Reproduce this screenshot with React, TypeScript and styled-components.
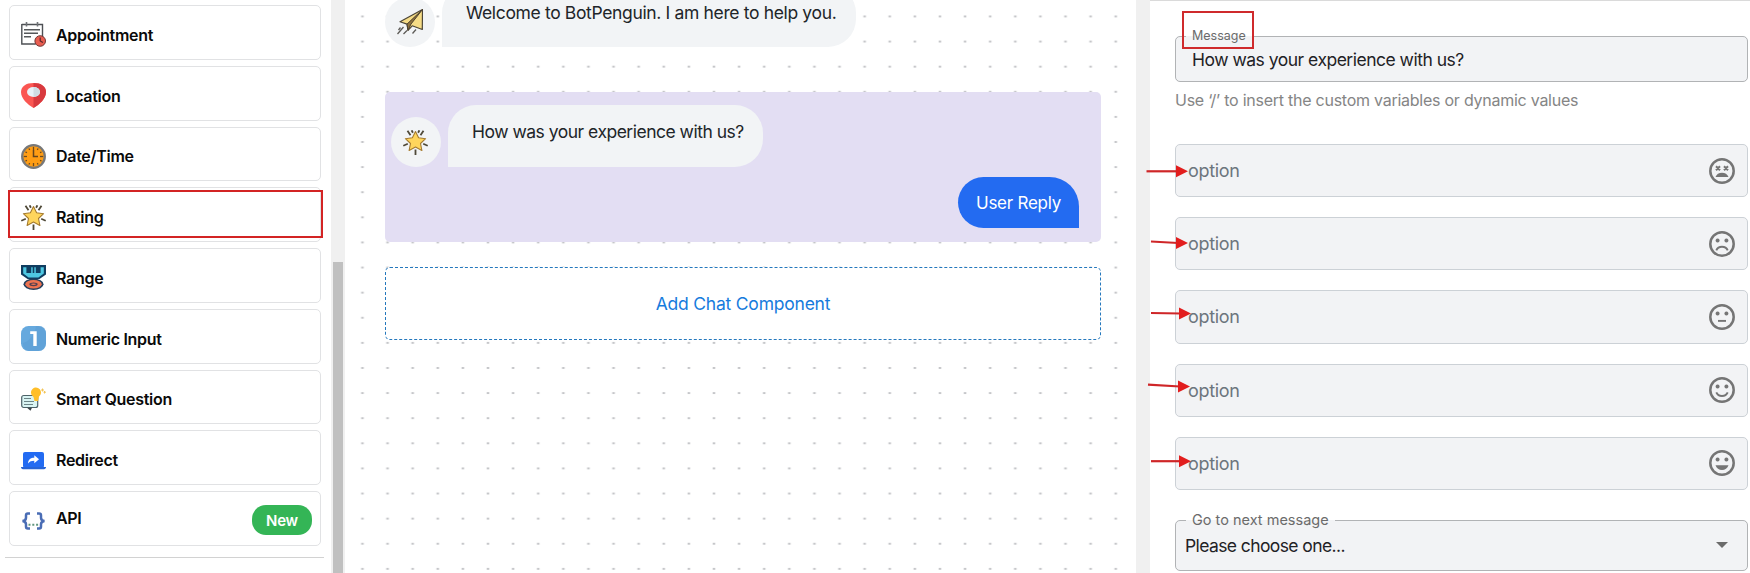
import React from "react";
import styled, { createGlobalStyle } from "styled-components";

const GlobalStyle = createGlobalStyle`
  * { box-sizing: border-box; }
  html, body { margin: 0; padding: 0; background: #fff; overflow: hidden; }
  body { font-family: Inter, "Liberation Sans", sans-serif; color: #212529; }
  svg { display: block; flex: none; }
`;

const Page = styled.div`
  position: relative;
  display: flex;
  width: 1750px;
  height: 573px;
  overflow: hidden;
  background: #fff;
`;

const Sidebar = styled.aside`
  width: 331px;
  padding: 5px 7px 0 5px;
`;

const ComponentList = styled.div`
  display: flex;
  flex-direction: column;
  gap: 6px;
  height: 553px;
  padding: 0 3px 0 4px;
  border-bottom: 1px solid #d2d2d2;
`;

const ComponentCard = styled.div`
  display: flex;
  align-items: center;
  height: 54.75px;
  flex: none;
  padding: 5px 8px 0 11px;
  border: 1px solid #e1e2e4;
  border-radius: 5px;
`;

const ComponentName = styled.span<{ $raised?: boolean }>`
  margin-left: 10px;
  flex: 1;
  font-size: 16px;
  font-weight: 600;
  line-height: 20px;
  color: #0a0a0a;
  letter-spacing: -0.3px;
  padding-bottom: ${(p) => (p.$raised ? 6 : 0)}px;
`;

const NewBadge = styled.span`
  display: flex;
  align-items: center;
  justify-content: center;
  width: 60px;
  height: 30px;
  padding-top: 2px;
  margin-bottom: 2px;
  border-radius: 14px;
  background: #34b556;
  color: #fff;
  font-size: 15px;
  font-weight: 600;
  letter-spacing: -0.2px;
`;

const ScrollTrack = styled.div`
  width: 14px;
  padding: 262px 2px 0;
  background: #f0f0f0;
`;

const ScrollThumb = styled.div`
  height: 311px;
  background: #c0c0c0;
`;

const Canvas = styled.main`
  width: 791px;
  padding: 0 35px 0 40px;
  background-image: radial-gradient(ellipse 1.9px 1.2px at center, #b9babd 0, #c9cacd 60%, transparent 100%);
  background-size: 25.12px 25.12px;
  background-position: 4.9px 3.9px;
`;

const MessageRow = styled.div`
  display: flex;
  align-items: flex-end;
  gap: 7px;
  height: 62px;
  margin-top: -15px;
`;

const Avatar = styled.div`
  display: flex;
  align-items: center;
  justify-content: center;
  width: 50px;
  height: 50px;
  padding-right: 1px;
  border-radius: 50%;
  background: #f2f4f6;
`;

const BotBubble = styled.div<{ $width: number; $spacing: number; $top: number }>`
  width: ${(p) => p.$width}px;
  height: 62px;
  padding: ${(p) => p.$top}px 0 0 24px;
  border-radius: 28px 28px 28px 0;
  background: #f2f4f6;
  color: #212529;
  font-size: 17.5px;
  line-height: 24px;
  white-space: nowrap;
  letter-spacing: ${(p) => p.$spacing}px;
`;

const SelectedBlock = styled.section`
  height: 150px;
  margin-top: 45px;
  padding: 28px 22px 0 6px;
  border-radius: 5px;
  background: #e3def3;
`;

const ReplyRow = styled.div`
  display: flex;
  justify-content: flex-end;
  margin-top: 10px;
`;

const UserBubble = styled.div`
  width: 121px;
  height: 51px;
  padding: 1px 0 0 18px;
  border-radius: 26px 30px 0 26px;
  background: #236bf1;
  color: #fff;
  font-size: 17px;
  line-height: 50px;
  letter-spacing: -0.25px;
  white-space: nowrap;
`;

const AddButton = styled.button`
  display: block;
  width: 100%;
  height: 73px;
  margin-top: 25px;
  border: 1px dashed #2478bd;
  border-radius: 5px;
  background: #fff;
  color: #167bdd;
  font-family: inherit;
  font-size: 17.5px;
  letter-spacing: -0.22px;
`;

const Divider = styled.div`
  width: 14px;
  background: #f0f0f0;
`;

const Settings = styled.section`
  width: 600px;
  padding: 35px 2px 0 25px;
  border-top: 1px solid #dadada;
`;

const OutlinedField = styled.fieldset<{ $height: number; $inset: number }>`
  display: flex;
  align-items: center;
  justify-content: space-between;
  position: relative;
  width: 573px;
  height: ${(p) => p.$height}px;
  margin: 0;
  padding: 0 19px 0 ${(p) => p.$inset}px;
  border: 1px solid #b1b3b5;
  border-radius: 5px;
  background: #f2f3f5;
`;

const FloatingLabel = styled.span<{ $size: number; $width: number }>`
  position: absolute;
  left: 10px;
  top: -11px;
  width: ${(p) => p.$width}px;
  height: 19px;
  padding-left: 6px;
  background: linear-gradient(#fff 0 10px, #f2f3f5 10px);
  color: #6b6b6b;
  font-size: ${(p) => p.$size}px;
  line-height: 19px;
  white-space: nowrap;
`;

const FieldValue = styled.span<{ $spacing: number }>`
  padding-top: 2px;
  font-size: 17.5px;
  line-height: 24px;
  color: #1f2226;
  letter-spacing: ${(p) => p.$spacing}px;
`;

const Hint = styled.p`
  margin: 7px 0 0;
  font-size: 16px;
  line-height: 22px;
  color: #858585;
  letter-spacing: -0.25px;
  white-space: nowrap;
`;

const OptionList = styled.div`
  display: flex;
  flex-direction: column;
  gap: 20px;
  margin: 33px 0 30px;
`;

const OptionField = styled.div`
  display: flex;
  align-items: center;
  justify-content: space-between;
  width: 573px;
  height: 53.2px;
  padding: 0 12px 0 12px;
  border: 1px solid #ccd1d6;
  border-radius: 5px;
  background: #f2f3f5;
  color: #6c757d;
  font-size: 18px;
  letter-spacing: -0.3px;
`;

const RatingMark = styled.div`
  position: absolute;
  left: 8px;
  top: 190px;
  width: 315px;
  height: 48px;
  border: 2px solid #d32424;
`;

const LabelMark = styled.div`
  position: absolute;
  left: 1182px;
  top: 11px;
  width: 72px;
  height: 38px;
  border: 2px solid #cf2a2c;
`;

const Arrows = styled.svg`
  position: absolute;
  left: 1140px;
  top: 150px;
`;

const AppointmentIcon = () => (
  <svg width="25" height="25" viewBox="0 0 25 25">
    <path d="M.8 2.5h20.7v14M.8 2v20h14" fill="none" stroke="#4d5054" strokeWidth="1.4" />
    <path d="M5.5 0v4.5M16.5 0v4.5" stroke="#707377" strokeWidth="1.6" />
    <path d="M3 7.8h16M3 11.3h14M3 14.8h7" stroke="#55585b" strokeWidth="1.4" />
    <circle cx="19.2" cy="19" r="5.3" fill="#e95d50" stroke="#703736" />
    <path d="M19.2 15.5V19l2.7 1.6" fill="none" stroke="#54272b" strokeWidth="1.2" />
  </svg>
);

const LocationIcon = () => (
  <svg width="25" height="25" viewBox="0 0 25 25">
    <path d="M12.5 0C5 0 0 3.4 0 9c0 6.5 6.5 12.5 12.5 16C18.5 21.5 25 15.5 25 9c0-5.6-5-9-12.5-9z" fill="#fa5652" />
    <path d="M12.5 0C20 0 25 3.4 25 9c0 6.5-6.5 12.5-12.5 16z" fill="#d8393e" />
    <ellipse cx="12.5" cy="9" rx="6.5" ry="4.9" fill="#e8f2f8" />
    <path d="M12.5 4.1a6.5 4.9 0 0 1 0 9.8z" fill="#cfdce3" />
  </svg>
);

const ClockIcon = () => (
  <svg width="25" height="25" viewBox="0 0 25 25">
    <circle cx="12.5" cy="12.5" r="11.3" fill="#ff9d14" stroke="#787878" strokeWidth="2.3" />
    <g stroke="#6c4a20" strokeWidth="1.3">
      {[0, 30, 60, 90, 120, 150, 180, 210, 240, 270, 300, 330].map((a) => (
        <path key={a} d={a % 90 ? "M12.5 3.3v1.6" : "M12.5 2.8v3.2"} transform={`rotate(${a} 12.5 12.5)`} />
      ))}
    </g>
    <path d="M12.5 6v6.500h4.500" fill="none" stroke="#64451e" strokeWidth="1.5" />
  </svg>
);

const StarIcon = () => (
  <svg width="25" height="25" viewBox="0 0 25 25">
    <path d="M4.500.8l3 4.400M8.600.3l1.300 2.400M20.500.8l-3 4.400M16.400.3l-1.300 2.400M.3 15.800l4.500-2M24.700 15.800l-4.500-2M12.500 19.500V25" stroke="#4f4938" strokeWidth="1.800" />
    <path d="M12.500 1.600l3.100 6.100 7 1-5.100 4.800 1.400 7-6.400-3.400-6.400 3.400 1.400-7-5.100-4.800 7-1z" fill="#ffd55c" stroke="#a57b2f" strokeWidth="1.100" strokeLinejoin="round" />
  </svg>
);

const MedalIcon = () => (
  <svg width="25" height="25" viewBox="0 0 25 25">
    <path d="M0 0h25v9.500L18.500 14h-12L0 9.500z" fill="#103d60" />
    <path d="M2.200 2.200h3.200V8h4.800V2.200h4.600V8h4.800V2.200h3.200v6.300l-5.400 4H7.600l-5.400-4z" fill="#4fc8e2" />
    <path d="M11.700 2h1.600v6h-1.600z" fill="#103d60" />
    <ellipse cx="12.500" cy="19.300" rx="10" ry="5.700" fill="#243f5c" />
    <ellipse cx="12.500" cy="19.300" rx="8.200" ry="4.200" fill="#ed7350" />
    <ellipse cx="12.500" cy="19.300" rx="4.200" ry="1.900" fill="#54404f" />
    <ellipse cx="12.500" cy="19.300" rx="2.400" ry=".8" fill="#ed7350" />
  </svg>
);

const NumberIcon = () => (
  <svg width="25" height="25" viewBox="0 0 25 25">
    <rect width="25" height="25" rx="7.500" fill="#66a9de" />
    <path d="M2 17C8 16 14 8 15 0h3c4.500 0 7 3 7 7.500v10c0 4.500-3 7.500-7.500 7.500h-9C5 25 2 22 2 17z" fill="#5b9dd4" opacity=".55" />
    <path d="M9.200 5.200h6.500V20h-3.400V8H9.200z" fill="#fff" />
  </svg>
);

const QuestionIcon = () => (
  <svg width="25" height="25" viewBox="0 0 25 25">
    <rect x=".7" y="8.500" width="16" height="12" rx="2" fill="#d9f4f3" stroke="#4d6268" strokeWidth="1.200" />
    <path d="M6 20.700h5l-1.500 3z" fill="#3d4549" />
    <path d="M3 11.500h7M3 14.500h10M3 17.500h9" stroke="#6d8587" strokeWidth="1" />
    <path d="M10 6a5 5 0 1 1 8 3.500L17 14h-3.500l-1-4A5 5 0 0 1 10 6z" fill="#ffbe28" />
    <path d="M21.500 1.500v3M20 3h3M23.500 4v2.500M22.500 5.200h2.500" stroke="#f2c458" />
  </svg>
);

const RedirectIcon = () => (
  <svg width="25" height="25" viewBox="0 0 25 25">
    <rect x="2" y="4" width="21" height="16" rx="2" fill="#236bf2" />
    <path d="M0 19h25c0 1.300-.8 2.200-2 2.200H2C.8 21.200 0 20.300 0 19z" fill="#2764d6" />
    <path d="M7 15.500c.3-4 2.600-5.700 6.300-5.700V7.300l4.700 4-4.700 4v-2.500c-2.800 0-4.700.7-6.300 2.700z" fill="#fff" />
  </svg>
);

const ApiIcon = () => (
  <svg width="25" height="25" viewBox="0 0 25 25">
    <g fill="none" stroke="#4a6db5" strokeWidth="2.500">
      <path d="M9 5.500H6.800c-1.400 0-1.800.7-1.800 2v2.300c0 2-1 3-3.500 3.300C4 13.400 5 14.300 5 16.300v2.200c0 1.300.4 2 1.800 2H9" />
      <path d="M16 5.500h2.200c1.400 0 1.800.7 1.800 2v2.300c0 2 1 3 3.500 3.300-2.500.3-3.500 1.200-3.500 3.200v2.200c0 1.300-.4 2-1.800 2H16" />
    </g>
    <path d="M7.500 16.800h10.500" stroke="#61967e" strokeWidth="2" strokeDasharray="2 1.800" />
  </svg>
);

const PlaneIcon = () => (
  <svg width="26" height="26" viewBox="0 0 26 26">
    <path d="M25.500.5L3 12.800l7 2.300 1 6.200 4.200-4.500 10.100 3.700z" fill="#f6dc86" stroke="#4d4637" strokeWidth="1.200" strokeLinejoin="round" />
    <path d="M25.500.5L10 15.100l1 6.200 3-6.300z" fill="#8f713c" stroke="#4b412f" strokeWidth="1" strokeLinejoin="round" />
    <path d="M6.500 18L.5 25M10 21.500L6.500 25M19 20.500l-3.500 4M3.500 18.500L1.500 21" stroke="#5d5b57" strokeWidth="1.300" />
  </svg>
);

type Mood = "dead" | "sad" | "neutral" | "happy" | "grin";

const Face = ({ mood }: { mood: Mood }) => (
  <svg width="26" height="26" viewBox="0 0 26 26" fill="none" stroke="#757575" strokeWidth="2.500">
    <circle cx="13" cy="13" r="11.700" />
    {mood === "dead" ? (
      <path d="M7 8.200l4 4m0-4l-4 4M15 8.200l4 4m0-4l-4 4" strokeWidth="2" />
    ) : (
      <path d="M8.600 7.400a2 2 0 1 0 .01 0zM17.400 7.400a2 2 0 1 0 .01 0z" fill="#757575" stroke="none" />
    )}
    {mood === "dead" && <path d="M6.500 19c1-2.800 3.400-4.300 6.500-4.300s5.500 1.500 6.500 4.300z" fill="#757575" stroke="none" />}
    {mood === "sad" && <path d="M7.300 19.300c1-2.300 3.100-3.500 5.700-3.500s4.700 1.200 5.700 3.500" strokeWidth="1.900" />}
    {mood === "neutral" && <path d="M9 16.900h8" strokeWidth="1.900" />}
    {mood === "happy" && <path d="M7.300 15.400c1 2.300 3.100 3.600 5.700 3.600s4.700-1.300 5.700-3.600" strokeWidth="1.900" />}
    {mood === "grin" && <path d="M6.500 15.200h13c-1 3.100-3.500 4.800-6.500 4.800s-5.500-1.700-6.500-4.800z" fill="#757575" stroke="none" />}
  </svg>
);

const components = [
  { name: "Appointment", icon: <AppointmentIcon /> },
  { name: "Location", icon: <LocationIcon /> },
  { name: "Date/Time", icon: <ClockIcon /> },
  { name: "Rating", icon: <StarIcon /> },
  { name: "Range", icon: <MedalIcon /> },
  { name: "Numeric Input", icon: <NumberIcon /> },
  { name: "Smart Question", icon: <QuestionIcon /> },
  { name: "Redirect", icon: <RedirectIcon /> },
  { name: "API", icon: <ApiIcon />, isNew: true },
];

const moods: Mood[] = ["dead", "sad", "neutral", "happy", "grin"];

const arrows = [
  [6.5, 21.3, 48, 21.3],
  [11, 91.5, 48, 93],
  [11, 163, 51, 163.5],
  [8, 234.7, 50, 236.5],
  [11, 311.2, 51, 311.2],
];

export default function App() {
  return (
    <>
      <GlobalStyle />
      <Page>
        <Sidebar>
          <ComponentList>
            {components.map((c) => (
              <ComponentCard key={c.name}>
                {c.icon}
                <ComponentName $raised={c.isNew}>{c.name}</ComponentName>
                {c.isNew && <NewBadge>New</NewBadge>}
              </ComponentCard>
            ))}
          </ComponentList>
        </Sidebar>
        <ScrollTrack>
          <ScrollThumb />
        </ScrollTrack>
        <Canvas>
          <MessageRow>
            <Avatar><PlaneIcon /></Avatar>
            <BotBubble $width={414} $spacing={-0.35} $top={16}>Welcome to BotPenguin. I am here to help you.</BotBubble>
          </MessageRow>
          <SelectedBlock>
            <MessageRow>
              <Avatar><StarIcon /></Avatar>
              <BotBubble $width={315} $spacing={-0.5} $top={15}>How was your experience with us?</BotBubble>
            </MessageRow>
            <ReplyRow>
              <UserBubble>User Reply</UserBubble>
            </ReplyRow>
          </SelectedBlock>
          <AddButton>Add Chat Component</AddButton>
        </Canvas>
        <Divider />
        <Settings>
          <OutlinedField $height={46} $inset={16}>
            <FloatingLabel $size={12.5} $width={68}>Message</FloatingLabel>
            <FieldValue $spacing={-0.5}>How was your experience with us?</FieldValue>
          </OutlinedField>
          <Hint>Use ‘/’ to insert the custom variables or dynamic values</Hint>
          <OptionList>
            {moods.map((mood) => (
              <OptionField key={mood}>
                option
                <Face mood={mood} />
              </OptionField>
            ))}
          </OptionList>
          <OutlinedField $height={51} $inset={9}>
            <FloatingLabel $size={14.5} $width={149}>Go to next message</FloatingLabel>
            <FieldValue $spacing={-0.6}>Please choose one...</FieldValue>
            <svg width="12" height="6" viewBox="0 0 12 6"><path d="M0 0h12L6 6z" fill="#6b6b6b" /></svg>
          </OutlinedField>
        </Settings>
        <RatingMark />
        <LabelMark />
        <Arrows width="60" height="330" viewBox="0 0 60 330">
          {arrows.map(([x1, y1, x2, y2]) => (
            <g key={y1}>
              <path d={`M${x1} ${y1}L${x2 - 10} ${y2}`} stroke="#cf2628" strokeWidth="2.200" />
              <path d={`M${x2 - 12} ${y2 - 6}L${x2} ${y2}L${x2 - 12} ${y2 + 6}z`} fill="#e21d1d" />
            </g>
          ))}
        </Arrows>
      </Page>
    </>
  );
}
